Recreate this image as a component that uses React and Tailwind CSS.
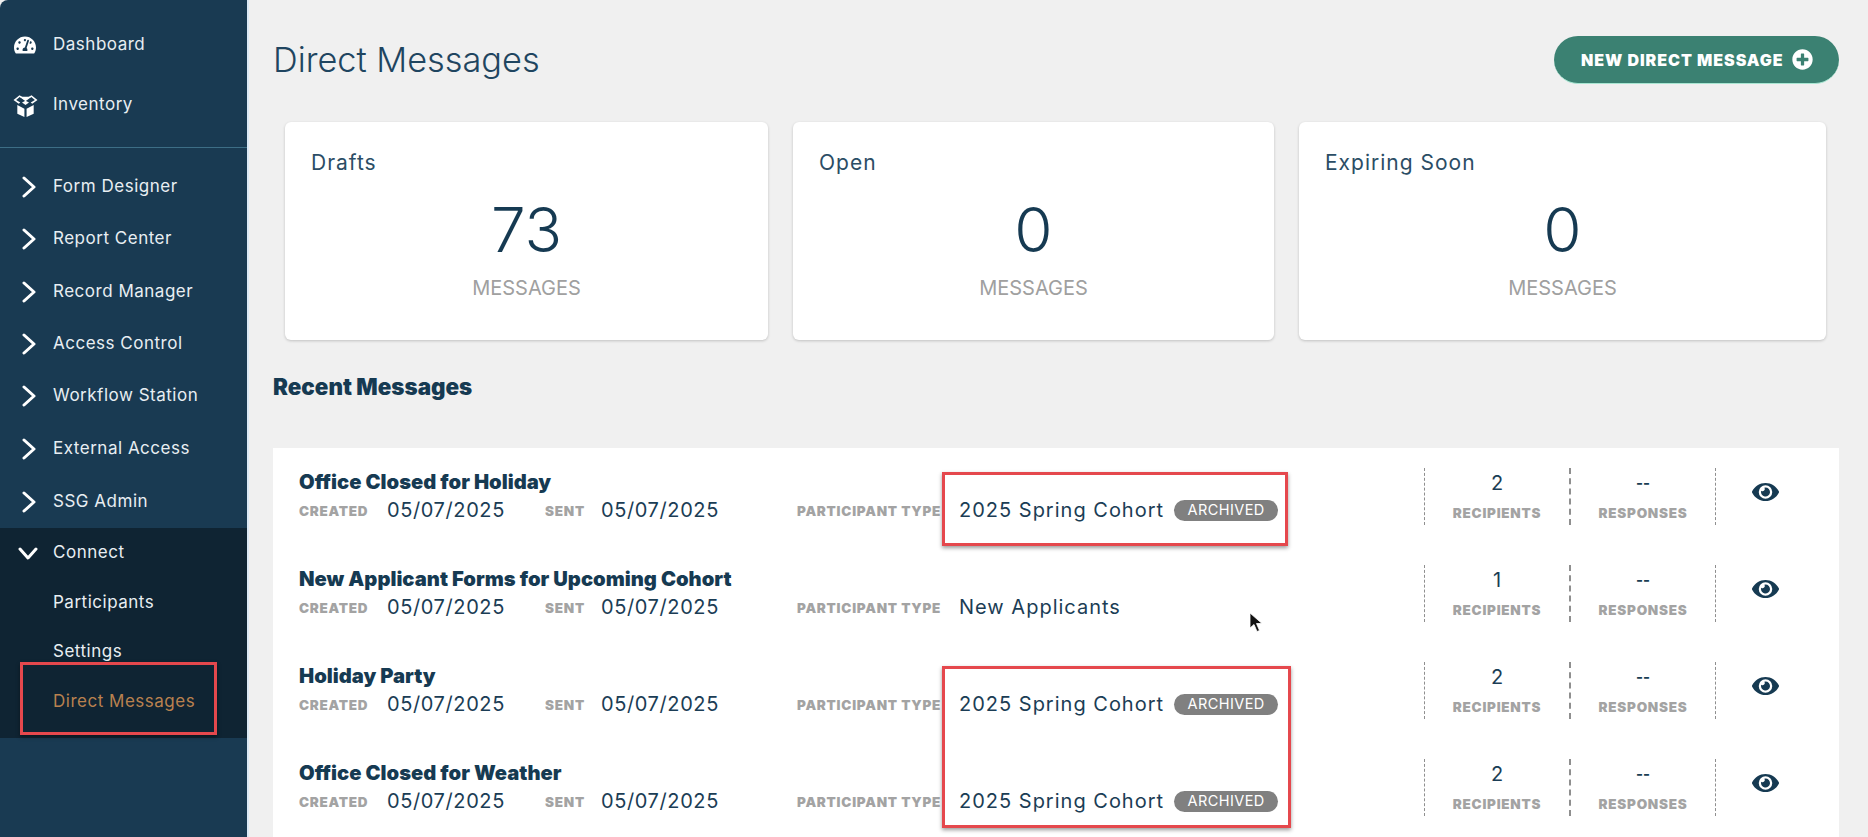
import React from 'react';
import { FaTachometerAlt, FaEye, FaPlusCircle } from 'react-icons/fa';

const navGroups = [
  { label: 'Form Designer', h: 'h-[53px]' },
  { label: 'Report Center', h: 'h-[52px]' },
  { label: 'Record Manager', h: 'h-[53px]' },
  { label: 'Access Control', h: 'h-[52px]' },
  { label: 'Workflow Station', h: 'h-[52px]' },
  { label: 'External Access', h: 'h-[53px]' },
  { label: 'SSG Admin', h: 'h-[53px]' },
];

const cards = [
  { title: 'Drafts', value: '73', w: 'w-[483px]' },
  { title: 'Open', value: '0', w: 'w-[481px]' },
  { title: 'Expiring Soon', value: '0', w: 'w-[527px]' },
];

const messages = [
  { title: 'Office Closed for Holiday', type: '2025 Spring Cohort', archived: true, recipients: 2 },
  { title: 'New Applicant Forms for Upcoming Cohort', type: 'New Applicants', archived: false, recipients: 1 },
  { title: 'Holiday Party', type: '2025 Spring Cohort', archived: true, recipients: 2 },
  { title: 'Office Closed for Weather', type: '2025 Spring Cohort', archived: true, recipients: 2 },
];

function MetaLabel({ children, w }) {
  return <span className={`${w} shrink-0 text-[13.5px] leading-[20px] font-black tracking-[0.055em] whitespace-nowrap text-[#a3a3a3]`}>{children}</span>;
}

function Chevron() {
  return (
    <svg width="14" height="22" viewBox="0 0 14 22" fill="none" stroke="#fff" strokeWidth="3" strokeLinecap="round" strokeLinejoin="round" className="mr-[17px] shrink-0">
      <path d="M2 2 12 11 2 20" />
    </svg>
  );
}

function BoxIcon() {
  return (
    <svg width="27" height="24" viewBox="0 0 24 22" fill="#fff" className="shrink-0">
      <path d="M1 6.5 6.5 2l5 3-1 .8L6.7 3.6 3.4 6.4l3.8 2.3-1.4 1.1zM23 6.5 17.500 2l-5 3 1 .8 3.800-2.200 3.300 2.800-3.800 2.300 1.400 1.100z" />
      <path d="M6.500 3.500h11L12 7.500zM4.500 11l6.500 3.500V22l-6.500-3zM19.500 11 13 14.500V22l6.500-3z" />
      <path d="M8.800 8.800 12 7l3.200 1.800L12 11z" />
    </svg>
  );
}

function MessageRow({ m }) {
  return (
    <div className="flex h-[97px] shrink-0 pl-[26px] text-[#1b3d55]">
      <div className="w-[1125px] shrink-0 pt-[21px]">
        <div className="h-[26px] text-[20.2px] leading-[26px] font-black whitespace-nowrap text-[#163a52]">{m.title}</div>
        <div className="flex h-[30px] items-center">
          <MetaLabel w="w-[88px] pt-[2px]">CREATED</MetaLabel>
          <span className="w-[158px] shrink-0 text-[20px] tracking-[0.03em]">05/07/2025</span>
          <MetaLabel w="w-[56px] pt-[2px]">SENT</MetaLabel>
          <span className="w-[196px] shrink-0 text-[20px] tracking-[0.03em]">05/07/2025</span>
          <MetaLabel w="w-[162px] pt-[2px]">PARTICIPANT TYPE</MetaLabel>
          <span className="text-[20px] tracking-[0.05em] whitespace-nowrap">{m.type}</span>
          {m.archived && (
            <span className="ml-[10px] flex h-[21px] w-[104px] shrink-0 items-center justify-center rounded-full bg-[#808080] text-[14.5px] tracking-[0.03em] text-white">ARCHIVED</span>
          )}
        </div>
      </div>
      <div className="mt-[20px] flex h-[57px] w-[145px] shrink-0 flex-col items-center border-l border-dashed border-[#8f8f8f]">
        <span className="h-[30px] text-[20px] leading-[30px]">{m.recipients}</span>
        <MetaLabel w="pt-[5px]">RECIPIENTS</MetaLabel>
      </div>
      <div className="mt-[20px] flex h-[57px] w-[146px] shrink-0 flex-col items-center border-l-2 border-dashed border-[#8f8f8f]">
        <span className="h-[30px] text-[15px] leading-[30px] font-bold">--</span>
        <MetaLabel w="pt-[5px]">RESPONSES</MetaLabel>
      </div>
      <div className="mt-[20px] flex h-[57px] flex-1 items-start border-l border-dashed border-[#8f8f8f] pt-[12px] pl-[36px]">
        <FaEye className="h-[24px] w-[27px] text-[#163a52]" />
      </div>
    </div>
  );
}

export default function App() {
  return (
    <div className="relative flex h-[837px] w-[1868px] overflow-hidden bg-[#f0f0f0] font-['Inter',sans-serif]">
      {/* sidebar */}
      <aside className="flex h-full w-[249px] shrink-0 flex-col rounded-tl-lg border-r-2 border-[#dbe9f5] bg-[#193a52] text-[17px] tracking-[0.03em] text-[#e8eef2]">
        <div className="flex h-[148px] shrink-0 flex-col border-b border-[#3d6e86] pt-[15px]">
          <div className="flex h-[60px] items-center pl-[14px]">
            <FaTachometerAlt className="h-[20px] w-[22px] text-white" />
            <span className="ml-[17px]">Dashboard</span>
          </div>
          <div className="flex h-[60px] items-center pl-[12px]">
            <BoxIcon />
            <span className="ml-[14px]">Inventory</span>
          </div>
        </div>
        <div className="flex shrink-0 flex-col pt-[12px]">
          {navGroups.map(g => (
            <div key={g.label} className={`flex ${g.h} shrink-0 items-center pl-[22px]`}>
              <Chevron />
              <span>{g.label}</span>
            </div>
          ))}
        </div>
        <div className="flex h-[210px] shrink-0 flex-col bg-[#0f2433]">
          <div className="flex h-[50px] items-center pl-[18px]">
            <svg width="20" height="13" viewBox="0 0 20 13" fill="none" stroke="#fff" strokeWidth="3" strokeLinecap="round" strokeLinejoin="round" className="mr-[15px] shrink-0">
              <path d="M2 2 10 11 18 2" />
            </svg>
            <span>Connect</span>
          </div>
          <div className="flex h-[49px] items-center pl-[53px]">Participants</div>
          <div className="flex h-[50px] items-center pl-[53px]">Settings</div>
          <div className="flex h-[50px] items-center pl-[53px] text-[#b9814f]">Direct Messages</div>
        </div>
      </aside>

      {/* main */}
      <main className="flex min-w-0 flex-1 flex-col pr-[29px] pl-[24px]">
        <header className="flex h-[122px] shrink-0 items-start justify-between pt-[36px]">
          <h1 className="text-[34.3px] leading-[48px] font-light text-[#1f4560]">Direct Messages</h1>
          <button className="flex h-[48px] w-[285px] items-center rounded-full border-b border-[#a8e6d2] bg-[#3b8172] pl-[27px] text-[16px] font-black tracking-[0.06em] whitespace-nowrap text-white">
            NEW DIRECT MESSAGE
            <FaPlusCircle className="ml-[8px] h-[21px] w-[21px] shrink-0" />
          </button>
        </header>

        <div className="flex shrink-0 gap-[25px] pl-[12px]">
          {cards.map(c => (
            <div key={c.title} className={`${c.w} flex h-[218px] shrink-0 flex-col rounded-md bg-white px-[26px] pt-[28px] shadow-[0_1px_3px_rgba(0,0,0,0.2)]`}>
              <div className="h-[26px] text-[21px] leading-[26px] tracking-[1px] text-[#2b4d65]">{c.title}</div>
              <div className="mt-[16px] text-center text-[62px] leading-[76px] font-light text-[#163a52]">{c.value}</div>
              <div className="mt-[5px] text-center text-[20px] text-[#a0a0a0]">MESSAGES</div>
            </div>
          ))}
        </div>

        <h2 className="flex h-[108px] shrink-0 items-start pt-[33px] text-[22.4px] leading-[28px] font-black text-[#163a52]">Recent Messages</h2>

        <div className="flex min-h-0 flex-1 flex-col bg-white">
          {messages.map(m => <MessageRow key={m.title} m={m} />)}
        </div>
      </main>

      {/* annotation boxes */}
      <div className="absolute top-[662px] left-[20px] h-[73px] w-[197px] border-[3px] border-[#e5484d] shadow-[0_2px_4px_rgba(0,0,0,0.4)]" />
      <div className="absolute top-[472px] left-[942px] h-[74px] w-[346px] border-[3px] border-[#e5484d] shadow-[0_2px_4px_rgba(0,0,0,0.4)]" />
      <div className="absolute top-[666px] left-[942px] h-[162px] w-[349px] border-[3px] border-[#e5484d] shadow-[0_2px_4px_rgba(0,0,0,0.4)]" />

      {/* mouse cursor */}
      <svg className="absolute top-[612px] left-[1249px]" width="14" height="22" viewBox="0 0 14 22">
        <path d="M1 1v15l4-3.5 3 7 2.500-1-3-7H13z" fill="#111" stroke="#fff" strokeWidth="0.8" />
      </svg>
    </div>
  );
}
